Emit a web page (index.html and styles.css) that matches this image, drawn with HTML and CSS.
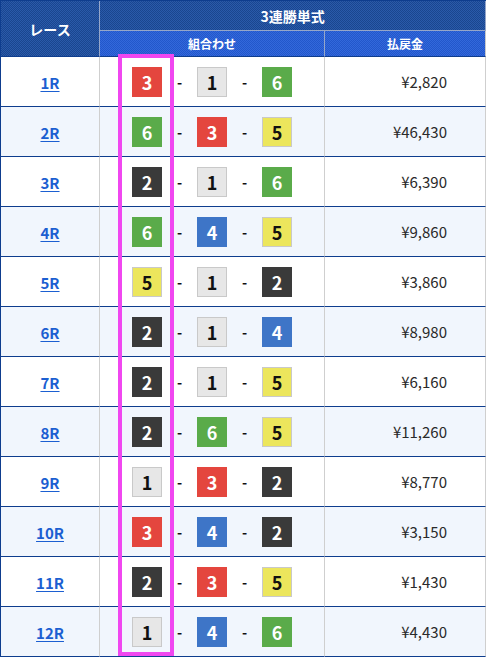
FILE: index.html
```html
<!DOCTYPE html>
<html lang="ja">
<head>
<meta charset="utf-8">
<link rel="stylesheet" href="styles.css">
</head>
<body>
<div class="wrap">
<table class="result">
  <colgroup><col class="c1"><col class="c2"><col class="c3"></colgroup>
  <thead>
    <tr>
      <th class="h-dark h-race" rowspan="2">レース</th>
      <th class="h-dark h-title" colspan="2">3連勝単式</th>
    </tr>
    <tr>
      <th class="h-sub">組合わせ</th>
      <th class="h-sub h-last">払戻金</th>
    </tr>
  </thead>
  <tbody>
    <tr><td class="race"><a href="#">1R</a></td><td class="combo"><span class="n n3">3</span><span class="dash">-</span><span class="n n1">1</span><span class="dash">-</span><span class="n n6">6</span></td><td class="pay">¥2,820</td></tr>
    <tr class="alt"><td class="race"><a href="#">2R</a></td><td class="combo"><span class="n n6">6</span><span class="dash">-</span><span class="n n3">3</span><span class="dash">-</span><span class="n n5">5</span></td><td class="pay">¥46,430</td></tr>
    <tr><td class="race"><a href="#">3R</a></td><td class="combo"><span class="n n2">2</span><span class="dash">-</span><span class="n n1">1</span><span class="dash">-</span><span class="n n6">6</span></td><td class="pay">¥6,390</td></tr>
    <tr class="alt"><td class="race"><a href="#">4R</a></td><td class="combo"><span class="n n6">6</span><span class="dash">-</span><span class="n n4">4</span><span class="dash">-</span><span class="n n5">5</span></td><td class="pay">¥9,860</td></tr>
    <tr><td class="race"><a href="#">5R</a></td><td class="combo"><span class="n n5">5</span><span class="dash">-</span><span class="n n1">1</span><span class="dash">-</span><span class="n n2">2</span></td><td class="pay">¥3,860</td></tr>
    <tr class="alt"><td class="race"><a href="#">6R</a></td><td class="combo"><span class="n n2">2</span><span class="dash">-</span><span class="n n1">1</span><span class="dash">-</span><span class="n n4">4</span></td><td class="pay">¥8,980</td></tr>
    <tr><td class="race"><a href="#">7R</a></td><td class="combo"><span class="n n2">2</span><span class="dash">-</span><span class="n n1">1</span><span class="dash">-</span><span class="n n5">5</span></td><td class="pay">¥6,160</td></tr>
    <tr class="alt"><td class="race"><a href="#">8R</a></td><td class="combo"><span class="n n2">2</span><span class="dash">-</span><span class="n n6">6</span><span class="dash">-</span><span class="n n5">5</span></td><td class="pay">¥11,260</td></tr>
    <tr><td class="race"><a href="#">9R</a></td><td class="combo"><span class="n n1">1</span><span class="dash">-</span><span class="n n3">3</span><span class="dash">-</span><span class="n n2">2</span></td><td class="pay">¥8,770</td></tr>
    <tr class="alt"><td class="race"><a href="#">10R</a></td><td class="combo"><span class="n n3">3</span><span class="dash">-</span><span class="n n4">4</span><span class="dash">-</span><span class="n n2">2</span></td><td class="pay">¥3,150</td></tr>
    <tr><td class="race"><a href="#">11R</a></td><td class="combo"><span class="n n2">2</span><span class="dash">-</span><span class="n n3">3</span><span class="dash">-</span><span class="n n5">5</span></td><td class="pay">¥1,430</td></tr>
    <tr class="alt"><td class="race"><a href="#">12R</a></td><td class="combo"><span class="n n1">1</span><span class="dash">-</span><span class="n n4">4</span><span class="dash">-</span><span class="n n6">6</span></td><td class="pay">¥4,430</td></tr>
  </tbody>
</table>
<div class="highlight"></div>
</div>
</body>
</html>
```
FILE: styles.css
```css
* { box-sizing: border-box; }
html, body { margin: 0; padding: 0; background: #fff; }
body { font-family: "Noto Sans CJK JP", "Noto Sans", sans-serif; color: #222; }

.wrap { position: relative; width: 486px; }

.result {
  width: 486px;
  table-layout: fixed;
  border-collapse: separate;
  border-spacing: 0;
  border-left: 1px solid #0e3d8e;
  border-top: 1px solid #0e3d8e;
}
.c1 { width: 99px; }
.c2 { width: 225px; }
.c3 { width: 161px; }

th {
  color: #fff;
  font-weight: bold;
  padding: 0;
  border-right: 1px solid #95a6c9;
  border-bottom: 1px solid #95a6c9;
  line-height: 1;
}
.h-dark {
  background-color: #22509e;
  background-image: repeating-conic-gradient(#1a468f 0 25%, #2a5aaa 0 50%);
  background-size: 2px 2px;
}
.h-sub {
  background-color: #2a5fd2;
  background-image: repeating-conic-gradient(#2257cb 0 25%, #3368db 0 50%);
  background-size: 2px 2px;
  height: 26px;
  font-size: 12px;
  border-bottom-color: #0e3d8e;
}
.h-title { height: 30px; font-size: 14px; }
.h-race { font-size: 14px; border-bottom-color: #0e3d8e; }
.h-last { border-right-color: #c9c9c9; }

td {
  height: 50px;
  padding: 0;
  border-right: 1px solid #cfcfcf;
  border-bottom: 1px solid #0e3d8e;
  vertical-align: middle;
}
.alt td { background: #f1f6fd; }

.race { text-align: center; }
.race a {
  color: #1c5fd1;
  font-weight: bold;
  font-size: 15px;
  text-decoration: underline;
  text-underline-offset: 2px;
}

.combo { text-align: center; font-size: 0; }
.n {
  display: inline-flex;
  align-items: center;
  justify-content: center;
  width: 30px;
  height: 30px;
  vertical-align: middle;
  font-size: 18px;
  font-weight: bold;
  color: #fff;
  line-height: 1;
}
.n1 { background: #e7e7e7; border: 1px solid #c9c9c9; color: #111; }
.n2 { background: #3a3a3a; }
.n3 { background: #e4463e; }
.n4 { background: #3e75c7; }
.n5 { background: #ece65c; border: 1px solid #c9c9c9; color: #111; }
.n6 { background: #5aab4a; }
.dash {
  display: inline-block;
  width: 35px;
  vertical-align: middle;
  font-size: 14px;
  font-weight: bold;
  color: #111;
  line-height: 1;
}

.pay {
  text-align: right;
  padding-right: 38px;
  font-size: 15px;
  color: #2a2a2a;
}

.highlight {
  position: absolute;
  left: 118px;
  top: 54px;
  width: 56px;
  height: 602px;
  border: 4px solid #f047f0;
  pointer-events: none;
}
```
